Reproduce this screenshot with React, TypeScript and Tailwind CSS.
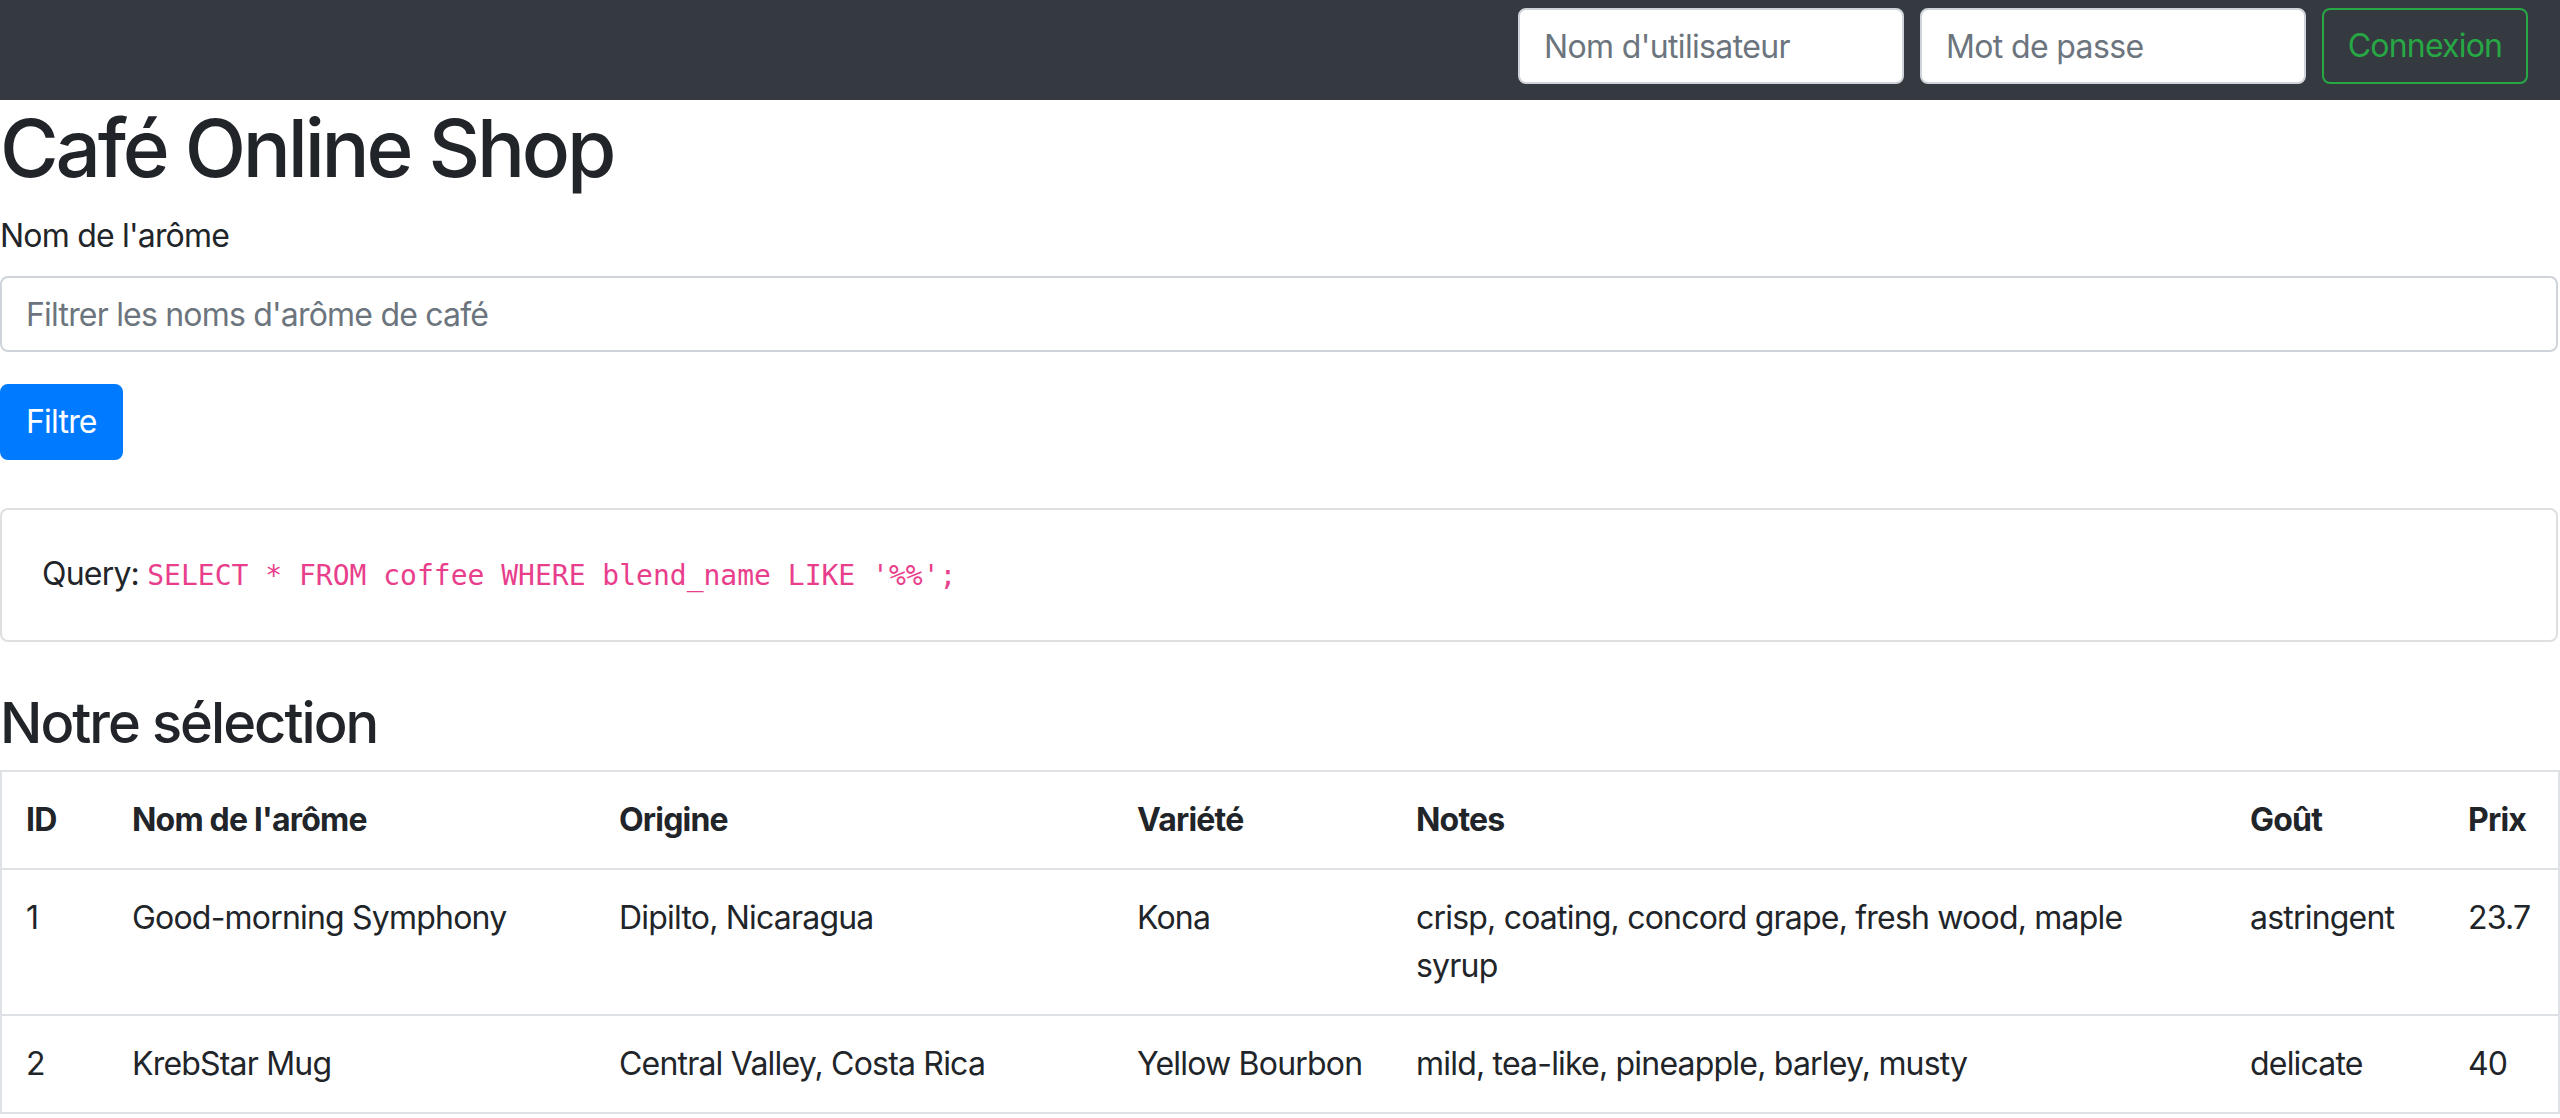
const coffees = [
  {
    id: 1,
    name: "Good-morning Symphony",
    origin: "Dipilto, Nicaragua",
    variety: "Kona",
    notes: "crisp, coating, concord grape, fresh wood, maple syrup",
    taste: "astringent",
    price: "23.7",
  },
  {
    id: 2,
    name: "KrebStar Mug",
    origin: "Central Valley, Costa Rica",
    variety: "Yellow Bourbon",
    notes: "mild, tea-like, pineapple, barley, musty",
    taste: "delicate",
    price: "40",
  },
];

const Navbar = () => {
  return (
    <nav className="bg-[#343a40] flex justify-end items-start pt-[8px] pb-[16px] px-[32px] h-[100px]">
      <form className="flex items-center gap-[16px]">
        <input
          type="text"
          placeholder="Nom d'utilisateur"
          className="w-[386px] h-[76px] px-[24px] bg-white border-2 border-[#ced4da] rounded-[8px] text-[32px] tracking-[-0.02em] placeholder:text-[#6c757d] outline-none"
        />
        <input
          type="password"
          placeholder="Mot de passe"
          className="w-[386px] h-[76px] px-[24px] bg-white border-2 border-[#ced4da] rounded-[8px] text-[32px] tracking-[-0.02em] placeholder:text-[#6c757d] outline-none"
        />
        <button
          type="button"
          className="w-[206px] h-[76px] border-2 border-[#28a745] rounded-[8px] text-[#28a745] text-[32px] leading-[48px]"
        >
          Connexion
        </button>
      </form>
    </nav>
  );
};

const CoffeeTable = () => {
  const th = "text-left font-bold align-top p-[24px] border-b-2 border-[#dee2e6]";
  const td = "align-top p-[24px] border-b-2 border-[#dee2e6]";
  return (
    <table className="w-full table-fixed border-collapse border-2 border-[#dee2e6]">
      <colgroup>
        <col className="w-[107px]" />
        <col className="w-[487px]" />
        <col className="w-[518px]" />
        <col className="w-[279px]" />
        <col className="w-[834px]" />
        <col className="w-[218px]" />
        <col className="w-[115px]" />
      </colgroup>
      <thead>
        <tr>
          <th className={th}>ID</th>
          <th className={th}>Nom de l'arôme</th>
          <th className={th}>Origine</th>
          <th className={th}>Variété</th>
          <th className={th}>Notes</th>
          <th className={th}>Goût</th>
          <th className={th}>Prix</th>
        </tr>
      </thead>
      <tbody>
        {coffees.map((c) => (
          <tr key={c.id}>
            <td className={td}>{c.id}</td>
            <td className={td}>{c.name}</td>
            <td className={td}>{c.origin}</td>
            <td className={td}>{c.variety}</td>
            <td className={td}>{c.notes}</td>
            <td className={td}>{c.taste}</td>
            <td className={td}>{c.price}</td>
          </tr>
        ))}
      </tbody>
    </table>
  );
};

export default function App() {
  return (
    <div className="min-h-screen bg-white text-[#212529] text-[32px] leading-[48px] tracking-[-0.025em] font-['Inter','Noto_Sans',sans-serif]">
      <Navbar />
      <main className="mr-[2px]">
        <h1 className="text-[80px] leading-[96px] font-medium tracking-[-0.04em] mb-[16px]">Café Online Shop</h1>
        <form>
          <div className="mb-[32px]">
            <label className="inline-block mb-[16px]">Nom de l'arôme</label>
            <input
              type="text"
              placeholder="Filtrer les noms d'arôme de café"
              className="block w-full h-[76px] px-[24px] border-2 border-[#ced4da] rounded-[8px] text-[32px] placeholder:text-[#6c757d] outline-none"
            />
          </div>
          <button
            type="button"
            className="h-[76px] px-[24px] bg-[#007bff] border-2 border-[#007bff] rounded-[8px] text-white text-[32px] leading-[48px]"
          >
            Filtre
          </button>
        </form>
        <div className="mt-[48px] border-2 border-[#dfdfdf] rounded-[8px]">
          <div className="p-[40px]">
            Query:{" "}
            <code className="font-['DejaVu_Sans_Mono',monospace] text-[28px] tracking-normal text-[#e83e8c]">
              SELECT * FROM coffee WHERE blend_name LIKE '%%';
            </code>
          </div>
        </div>
        <h3 className="mt-[48px] mb-[13px] text-[56px] leading-[67px] font-medium tracking-[-0.035em]">Notre sélection</h3>
        <CoffeeTable />
      </main>
    </div>
  );
}
